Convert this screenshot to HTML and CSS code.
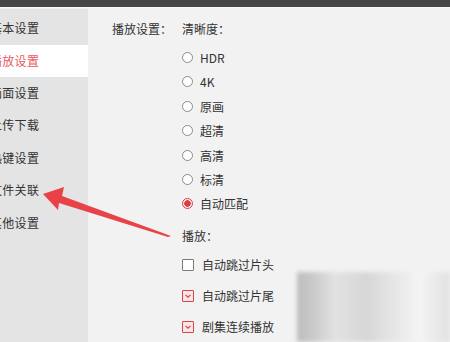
FILE: index.html
```html
<!DOCTYPE html>
<html lang="zh">
<head>
    <meta charset="UTF-8">
    <title>设置</title>
    <link rel="stylesheet" href="styles.css">
</head>
<body>
    <div class="window">
        <div class="titlebar"></div>
        <div class="titleline"></div>

        <div class="content">
            <!-- 左侧菜单 -->
            <ul class="sidebar">
                <li>基本设置</li>
                <li class="active">播放设置</li>
                <li>画面设置</li>
                <li>上传下载</li>
                <li>热键设置</li>
                <li>文件关联</li>
                <li>其他设置</li>
            </ul>

            <!-- 右侧设置 -->
            <div class="main">
                <div class="section-label">播放设置：</div>
                <div class="options">
                    <div class="group-title">清晰度：</div>
                    <div class="radio-list">
                        <label class="radio"><span class="dot"></span>HDR</label>
                        <label class="radio"><span class="dot"></span>4K</label>
                        <label class="radio"><span class="dot"></span>原画</label>
                        <label class="radio"><span class="dot"></span>超清</label>
                        <label class="radio"><span class="dot"></span>高清</label>
                        <label class="radio"><span class="dot"></span>标清</label>
                        <label class="radio checked"><span class="dot"></span>自动匹配</label>
                    </div>

                    <div class="group-title play-title">播放：</div>
                    <div class="check-list">
                        <label class="check"><span class="box"></span>自动跳过片头</label>
                        <label class="check checked"><span class="box"><svg viewBox="0 0 12 12"><path d="M3 4.6 L6 7.4 L9 4.6" fill="none" stroke="#d9434a" stroke-width="1.4"/></svg></span>自动跳过片尾</label>
                        <label class="check checked"><span class="box"><svg viewBox="0 0 12 12"><path d="M3 4.6 L6 7.4 L9 4.6" fill="none" stroke="#d9434a" stroke-width="1.4"/></svg></span>剧集连续播放</label>
                    </div>
                </div>
            </div>
        </div>

        <!-- 红色箭头标注 -->
        <svg class="arrow" width="450" height="342" viewBox="0 0 450 342">
            <polygon points="43,194 64,187 62,196 171,236 168,237 59,203 58,210" fill="#e8343a" opacity="0.92"/>
        </svg>

        <!-- 水印 -->
        <div class="watermark"></div>
    </div>
</body>
</html>
```

FILE: styles.css
```css
body {
    margin: 0;
    font-family: "Noto Sans CJK SC", "Noto Sans", sans-serif;
    font-size: 12px;
    color: #333;
    background: #f2f2f2;
}

.window {
    position: relative;
    width: 450px;
    height: 342px;
    overflow: hidden;
    display: flex;
    flex-direction: column;
}

.titlebar {
    height: 10px;
    background: #464646;
}

.titleline {
    height: 3px;
    background: linear-gradient(#ffffff, #ececec);
}

.content {
    flex: 1;
    display: flex;
}

.sidebar {
    list-style: none;
    margin: 0;
    padding: 3px 0 0 0;
    width: 88px;
    background: #e4e4e4;
}

.sidebar li {
    height: 32.4px;
    line-height: 32px;
    margin-left: -10px;
    color: #333;
    letter-spacing: 0.3px;
}

.sidebar li.active {
    background: #ffffff;
    color: #e8585d;
}

.main {
    flex: 1;
    display: flex;
    padding: 11px 0 0 24px;
}

.section-label {
    width: 70px;
}

.options {
    display: flex;
    flex-direction: column;
}

.group-title {
    height: 16px;
}

.radio-list {
    display: flex;
    flex-direction: column;
    padding-top: 9px;
}

.radio {
    display: flex;
    align-items: center;
    height: 24.4px;
    gap: 7px;
}

.dot {
    width: 9px;
    height: 9px;
    border: 1px solid #8a8a8a;
    border-radius: 50%;
    box-sizing: content-box;
    background: #fff;
}

.radio.checked .dot {
    border-color: #d9434a;
    background: radial-gradient(circle, #e03c44 0 3px, #fbe9ea 3.5px);
}

.play-title {
    margin-top: 11px;
}

.check-list {
    display: flex;
    flex-direction: column;
    padding-top: 6px;
}

.check {
    display: flex;
    align-items: center;
    height: 31px;
    gap: 8px;
}

.box {
    width: 10px;
    height: 10px;
    border: 1px solid #7a7a7a;
    border-radius: 1px;
    background: #fff;
    display: flex;
}

.check.checked .box {
    border-color: #d9434a;
    background: #fbe4e6;
}

.box svg {
    width: 10px;
    height: 10px;
}

.arrow {
    position: absolute;
    left: 0;
    top: 0;
    pointer-events: none;
}

.watermark {
    position: absolute;
    left: 297px;
    top: 272px;
    width: 153px;
    height: 70px;
    background:
        linear-gradient(90deg, #b3b3b3 0%, #c6c6c6 12%, #e0e0e0 25%, #d2d2d2 45%, #e6e6e6 65%, #f5f5f5 80%, #dedede 100%);
    filter: blur(2px);
    opacity: 0.85;
}
```
